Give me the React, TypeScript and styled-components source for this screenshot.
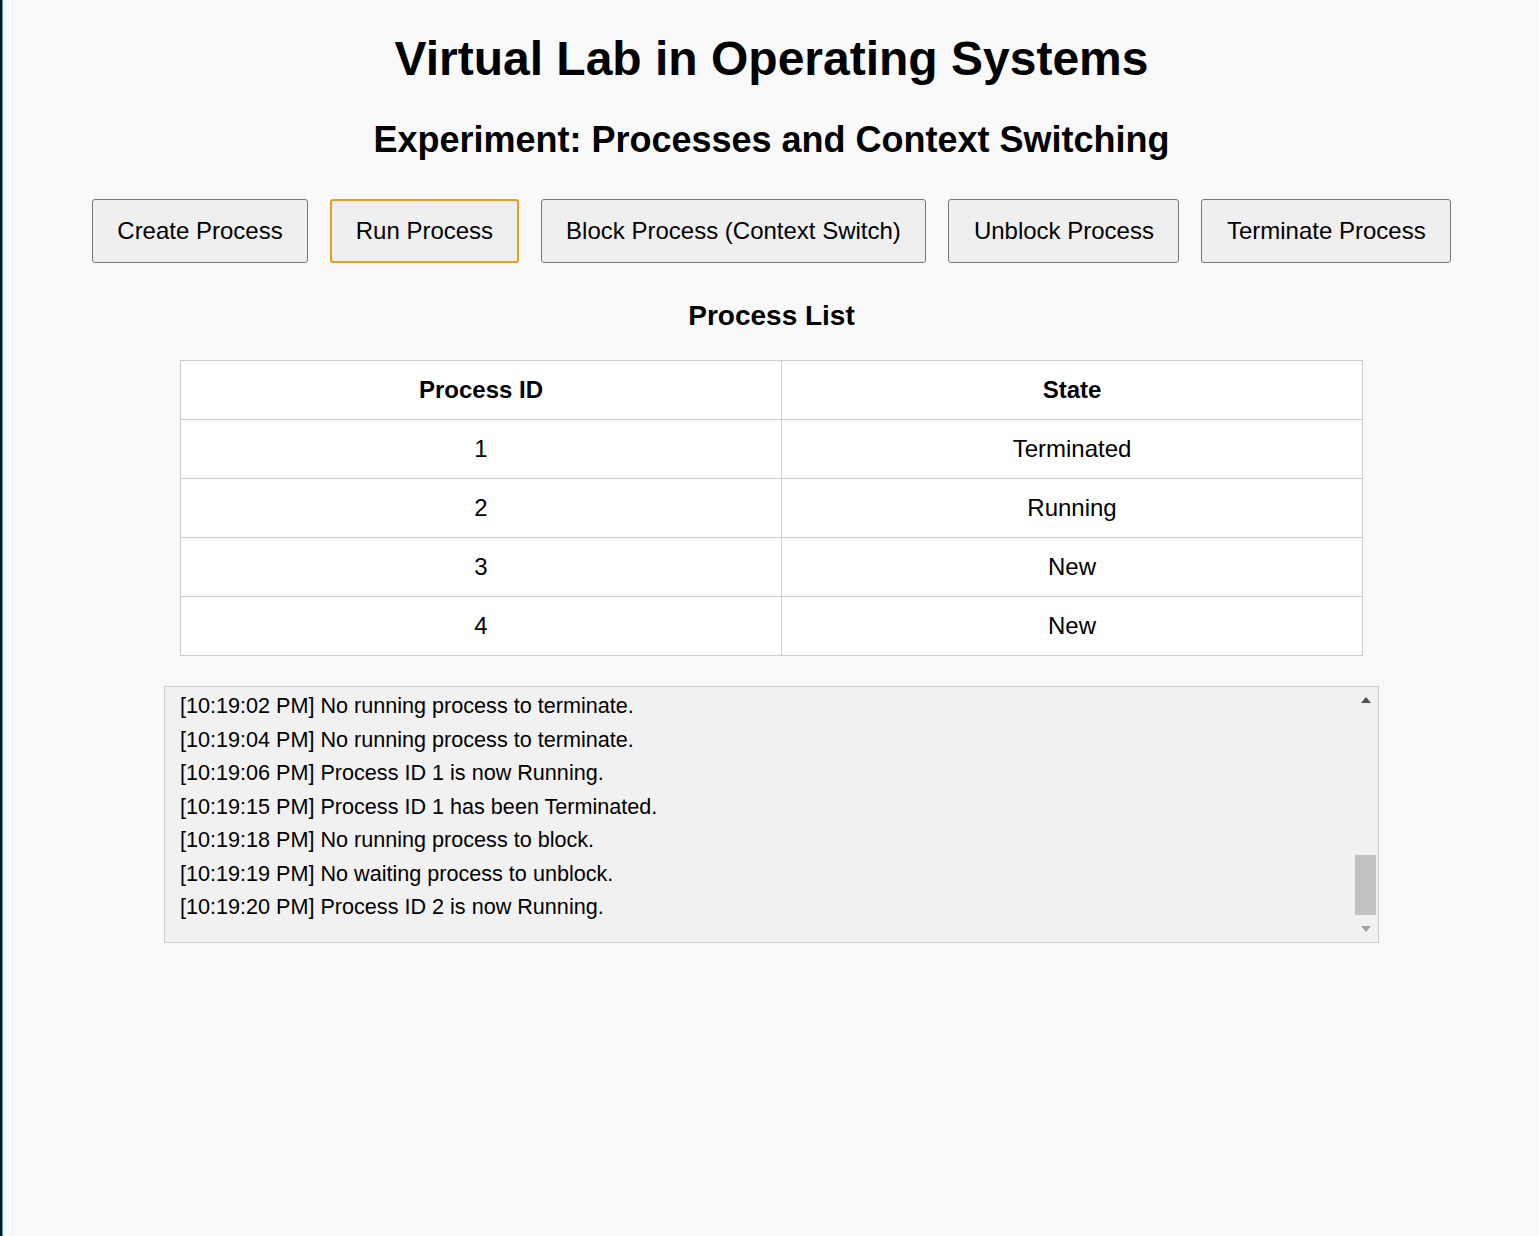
import React from "react";
import styled, { createGlobalStyle } from "styled-components";

const GlobalStyle = createGlobalStyle`
  html, body {
    margin: 0;
    padding: 0;
    background: #f9f9f9;
  }
  body {
    font-family: "Liberation Sans", Arial, sans-serif;
    color: #000;
  }
`;

const Page = styled.div`
  min-height: 100vh;
  box-sizing: border-box;
  border-left: 2px solid #0c141a;
  box-shadow: inset 1px 0 0 #3fa9cc;
  padding: 31px 0 0 2px;
  display: flex;
  flex-direction: column;
  align-items: center;
`;

const Title = styled.h1`
  margin: 0 0 33px;
  font-size: 48px;
  line-height: 55px;
  font-weight: 700;
  text-align: center;
`;

const Subtitle = styled.h2`
  margin: 0 0 39px;
  font-size: 36px;
  line-height: 41px;
  font-weight: 700;
  text-align: center;
`;

const Toolbar = styled.div`
  display: flex;
  gap: 22px;
  justify-content: center;
  margin-bottom: 37px;
`;

const ActionButton = styled.button<{ $focused?: boolean }>`
  height: 64px;
  box-sizing: border-box;
  padding: 0 ${(p) => (p.$focused ? 23.5 : 24.5)}px;
  font-family: "Liberation Sans", Arial, sans-serif;
  font-size: 24px;
  color: #000;
  background: #efefef;
  border: ${(p) => (p.$focused ? "2px solid #e99f17" : "1px solid #767676")};
  border-radius: 3px;
  cursor: pointer;
  white-space: nowrap;
`;

const SectionTitle = styled.h3`
  margin: 0 0 28px;
  font-size: 28px;
  line-height: 32px;
  font-weight: 700;
  text-align: center;
`;

const Table = styled.table`
  width: 1183px;
  border-collapse: collapse;
  background: #fff;
  margin-bottom: 30px;
`;

const HeadCell = styled.th<{ $w?: number }>`
  border: 1px solid #cccccc;
  padding: 15px;
  font-size: 24px;
  line-height: 28px;
  font-weight: 700;
  text-align: center;
  width: ${(p) => (p.$w ? `${p.$w}px` : "auto")};
`;

const Cell = styled.td`
  border: 1px solid #cccccc;
  padding: 15px;
  font-size: 24px;
  line-height: 28px;
  text-align: center;
`;

const LogPanel = styled.div`
  width: 1215px;
  height: 257px;
  box-sizing: border-box;
  border: 1px solid #cccccc;
  background: #f1f1f1;
  display: flex;
`;

const LogView = styled.div`
  flex: 1;
  min-width: 0;
  overflow: hidden;
  padding: 2px 15px 0;
`;

const LogLine = styled.div`
  font-size: 21.6px;
  line-height: 33.5px;
  color: #000;
  white-space: nowrap;
`;

const ScrollBar = styled.div`
  width: 21px;
  margin-right: 2px;
  display: flex;
  flex-direction: column;
`;

const ScrollArrow = styled.div<{ $dir: "up" | "down" }>`
  height: 26px;
  display: flex;
  align-items: center;
  justify-content: center;

  &::before {
    content: "";
    width: 0;
    height: 0;
    border-left: 5.5px solid transparent;
    border-right: 5.5px solid transparent;
    ${(p) =>
      p.$dir === "up"
        ? "border-bottom: 6px solid #505050;"
        : "border-top: 6px solid #a3a3a3;"}
  }
`;

const ScrollTrack = styled.div`
  flex: 1;
  display: flex;
  flex-direction: column;
  justify-content: flex-end;
  padding-bottom: 1px;
`;

const ScrollThumb = styled.div`
  height: 60px;
  background: #c1c1c1;
`;

const buttons = [
  "Create Process",
  "Run Process",
  "Block Process (Context Switch)",
  "Unblock Process",
  "Terminate Process",
];

const processes = [
  { id: 1, state: "Terminated" },
  { id: 2, state: "Running" },
  { id: 3, state: "New" },
  { id: 4, state: "New" },
];

const logs = [
  "[10:18:08 PM] Process ID 1 created in New state.",
  "[10:18:11 PM] Process ID 1 is now Running.",
  "[10:18:14 PM] Process ID 1 is now Waiting (Context Switch).",
  "[10:18:20 PM] Process ID 1 is now Ready.",
  "[10:18:23 PM] Process ID 2 created in New state.",
  "[10:18:44 PM] Process ID 3 created in New state.",
  "[10:18:47 PM] Process ID 4 created in New state.",
  "[10:19:02 PM] No running process to terminate.",
  "[10:19:04 PM] No running process to terminate.",
  "[10:19:06 PM] Process ID 1 is now Running.",
  "[10:19:15 PM] Process ID 1 has been Terminated.",
  "[10:19:18 PM] No running process to block.",
  "[10:19:19 PM] No waiting process to unblock.",
  "[10:19:20 PM] Process ID 2 is now Running.",
];

const VISIBLE_LINES = 7;

export default function App() {
  const visible = logs.slice(-VISIBLE_LINES);

  return (
    <>
      <GlobalStyle />
      <Page>
        <Title>Virtual Lab in Operating Systems</Title>
        <Subtitle>Experiment: Processes and Context Switching</Subtitle>
        <Toolbar>
          {buttons.map((b) => (
            <ActionButton key={b} $focused={b === "Run Process"}>
              {b}
            </ActionButton>
          ))}
        </Toolbar>
        <SectionTitle>Process List</SectionTitle>
        <Table>
          <thead>
            <tr>
              <HeadCell $w={570}>Process ID</HeadCell>
              <HeadCell>State</HeadCell>
            </tr>
          </thead>
          <tbody>
            {processes.map((p) => (
              <tr key={p.id}>
                <Cell>{p.id}</Cell>
                <Cell>{p.state}</Cell>
              </tr>
            ))}
          </tbody>
        </Table>
        <LogPanel>
          <LogView>
            {visible.map((l, i) => (
              <LogLine key={i}>{l}</LogLine>
            ))}
          </LogView>
          <ScrollBar>
            <ScrollArrow $dir="up" />
            <ScrollTrack>
              <ScrollThumb />
            </ScrollTrack>
            <ScrollArrow $dir="down" />
          </ScrollBar>
        </LogPanel>
      </Page>
    </>
  );
}
